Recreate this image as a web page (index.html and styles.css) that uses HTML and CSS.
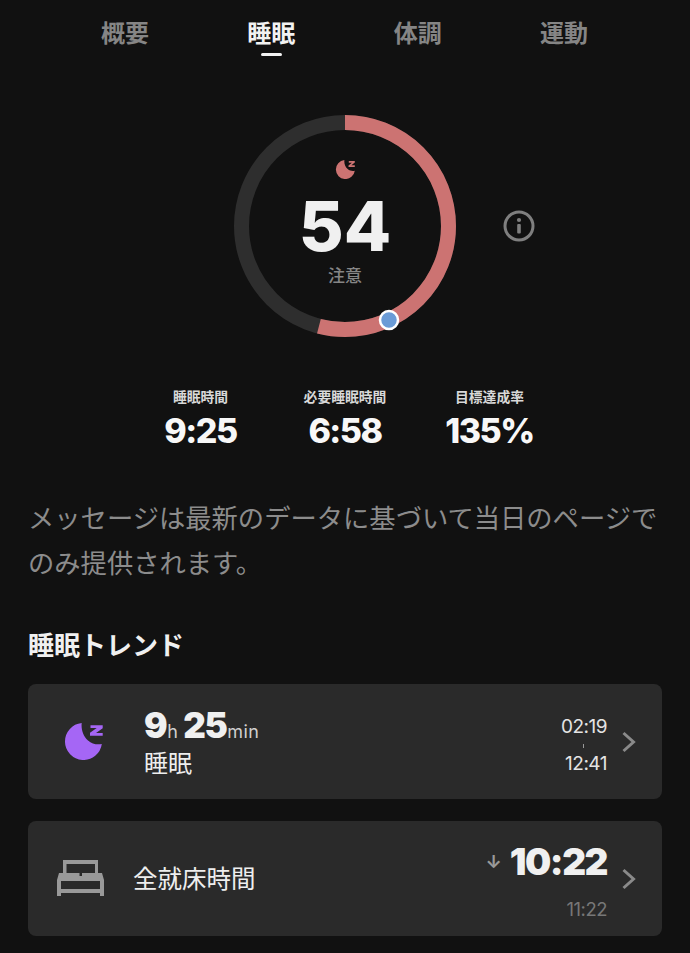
FILE: index.html
```html
<!DOCTYPE html>
<html lang="ja">

<head>
    <meta charset="UTF-8">
    <meta name="viewport" content="width=device-width, initial-scale=1.0">
    <title>睡眠</title>
    <link rel="stylesheet" href="styles.css">
</head>

<body>
    <nav class="tabs">
        <a class="tab">概要</a>
        <a class="tab active">睡眠</a>
        <a class="tab">体調</a>
        <a class="tab">運動</a>
    </nav>

    <section class="score">
        <div class="ring">
            <svg class="ring-svg" width="222" height="222" viewBox="0 0 222 222">
                <circle cx="111" cy="111" r="103.5" fill="none" stroke="#2e2e2e" stroke-width="15" />
                <circle cx="111" cy="111" r="103.5" fill="none" stroke="#cc7372" stroke-width="15"
                    stroke-dasharray="351.2 650.3" transform="rotate(-90 111 111)" />
                <circle cx="155" cy="205" r="9" fill="#6a9bd6" stroke="#fff" stroke-width="2.5" />
            </svg>
            <div class="ring-text">
                <svg class="moon-small" width="20" height="20" viewBox="0 0 20 20">
                    <path d="M9.4 1.1 A9.5 9.5 0 1 0 19.8 11.8 C17.3 12.3 14.8 11.8 12.7 10 C10 7.6 9 4.2 9.4 1.1 Z" fill="#cc7372" />
                    <path d="M13.8 2 H19.8 V3.5 L16.4 6.3 H19.8 V8 H13.5 V6.4 L16.9 3.7 H13.8 Z" fill="#cc7372" />
                </svg>
                <div class="score-num">54</div>
                <div class="score-label">注意</div>
            </div>
        </div>
        <svg class="info" width="32" height="32" viewBox="0 0 32 32">
            <circle cx="16" cy="16" r="14" fill="none" stroke="#7f7f7f" stroke-width="3" />
            <rect x="14.2" y="14" width="3.6" height="9.5" rx="1" fill="#7f7f7f" />
            <circle cx="16" cy="10" r="2.1" fill="#7f7f7f" />
        </svg>
    </section>

    <section class="stats">
        <div class="stat">
            <div class="stat-label">睡眠時間</div>
            <div class="stat-value">9:25</div>
        </div>
        <div class="stat">
            <div class="stat-label">必要睡眠時間</div>
            <div class="stat-value">6:58</div>
        </div>
        <div class="stat">
            <div class="stat-label">目標達成率</div>
            <div class="stat-value">135%</div>
        </div>
    </section>

    <p class="message">メッセージは最新のデータに基づいて当日のページでのみ提供されます。</p>

    <h2 class="trend-title">睡眠トレンド</h2>

    <div class="card">
        <svg class="moon" width="40" height="40" viewBox="0 0 40 40">
            <path d="M17.7 3.1 A18.5 18.5 0 1 0 37.8 24 C33 25 28 24 24 20.5 C19 16 17 9 17.7 3.1 Z" fill="#a566f5" />
            <path d="M26.5 5.2 H38.7 V8.2 L32 13 H38.7 V15.8 H26 V12.8 L32.7 8 H26.5 Z" fill="#a566f5" />
        </svg>
        <div class="sleep-main">
            <div class="duration"><b>9</b><span class="unit unit-h">h</span><b>25</b><span class="unit">min</span></div>
            <div class="sleep-label">睡眠</div>
        </div>
        <div class="times">
            <div>02:19</div>
            <div class="tick"></div>
            <div>12:41</div>
        </div>
        <svg class="chevron" width="16" height="22" viewBox="0 0 16 22">
            <path d="M2.5 2 L12.5 11 L2.5 20" fill="none" stroke="#8a8a8a" stroke-width="3" />
        </svg>
    </div>

    <div class="card">
        <svg class="bed" width="48" height="36" viewBox="0 0 48 36">
            <path fill="#999" fill-rule="evenodd" d="M6 0 H41 V13 H45 L47 20 V36 H43 V33 H4 V36 H0 V20 L2 13 H6 Z M9.5 4 H38 V13 H25 V16 H22.5 V13 H9.5 Z M4 21 V29 H43 V21 Z" />
        </svg>
        <div class="bed-label">全就床時間</div>
        <div class="bed-time">
            <div class="bed-top"><span class="arrow">↓</span><b>10:22</b></div>
            <div class="bed-sub">11:22</div>
        </div>
        <svg class="chevron" width="16" height="22" viewBox="0 0 16 22">
            <path d="M2.5 2 L12.5 11 L2.5 20" fill="none" stroke="#8a8a8a" stroke-width="3" />
        </svg>
    </div>
</body>

</html>
```

FILE: styles.css
```css
html,
body {
    height: 953px;
    overflow: hidden;
}

body {
    margin: 0;
    padding: 0;
    background-color: #111111;
    color: #f0f0f0;
    font-family: "Inter", "Noto Sans CJK JP", sans-serif;
}

.tabs {
    display: grid;
    grid-template-columns: repeat(4, 146.4px);
    justify-content: center;
    padding: 16px 1px 0 0;
    height: 99px;
    box-sizing: border-box;
}

.tab {
    justify-self: center;
    height: 40px;
    font-size: 24px;
    line-height: 35px;
    font-weight: 700;
    color: #858585;
    position: relative;
}

.tab.active {
    color: #f2f2f2;
}

.tab.active::after {
    content: "";
    position: absolute;
    left: 14px;
    right: 13px;
    bottom: 0;
    height: 3px;
    border-radius: 2px;
    background-color: #f2f2f2;
}

.score {
    display: flex;
    align-items: center;
    height: 254px;
    padding: 16px 0 16px 234px;
    box-sizing: border-box;
}

.ring {
    position: relative;
    width: 222px;
    height: 222px;
}

.ring-svg {
    display: block;
}

.ring-text {
    position: absolute;
    inset: 0;
    display: flex;
    flex-direction: column;
    align-items: center;
}

.moon-small {
    margin-top: 44px;
}

.score-num {
    font-size: 69px;
    line-height: 64px;
    font-weight: 800;
    margin-top: 15px;
    color: #f0f0f0;
}

.score-label {
    font-size: 17px;
    line-height: 24px;
    font-weight: 500;
    color: #858585;
    margin-top: 6px;
}

.info {
    margin-left: 47px;
}

.stats {
    display: grid;
    grid-template-columns: repeat(3, 144.5px);
    justify-content: center;
    margin-top: 33px;
    height: 74px;
}

.stat {
    text-align: center;
}

.stat-label {
    font-size: 13.8px;
    line-height: 22px;
    font-weight: 700;
    color: #d8d8d8;
}

.stat-value {
    font-size: 34px;
    line-height: 44px;
    font-weight: 800;
    letter-spacing: -1.5px;
    margin-top: 1px;
    color: #f8f8f8;
}

.message {
    margin: 36px 28px 0;
    font-size: 26.3px;
    line-height: 45px;
    font-weight: 400;
    color: #8c8c8c;
}

.trend-title {
    margin: 43px 28px 0;
    font-size: 26px;
    line-height: 34px;
    font-weight: 700;
    color: #f0f0f0;
}

.card {
    display: flex;
    align-items: center;
    margin: 21px 28px 0;
    height: 115px;
    background-color: #2a2a2a;
    border-radius: 8px;
    box-sizing: border-box;
    padding: 0 25px 0 28px;
}

.card + .card {
    margin-top: 22px;
}

.moon {
    flex: none;
    margin-left: 8px;
    margin-top: -4px;
}

.sleep-main {
    margin-left: 40px;
    flex: 1;
}

.duration {
    font-size: 35px;
    line-height: 40px;
    font-weight: 800;
    color: #f0f0f0;
    margin-top: -2px;
}

.duration b {
    letter-spacing: -1.5px;
}

.unit {
    font-size: 18px;
    font-weight: 400;
    color: #d0d0d0;
    letter-spacing: 0.5px;
    margin-left: 1px;
}

.unit-h {
    margin-right: 5px;
}

.sleep-label {
    font-size: 24px;
    line-height: 24px;
    color: #eeeeee;
}

.times {
    margin-top: 8px;
    text-align: right;
    font-size: 19px;
    line-height: 22px;
    color: #e4e4e4;
    letter-spacing: -0.5px;
}

.tick {
    width: 1px;
    height: 4px;
    margin: 6px 23px 5px auto;
    background-color: #999;
}

.chevron {
    flex: none;
    margin-left: 14px;
}

.bed {
    flex: none;
    margin-top: -2px;
    margin-left: 1px;
}

.bed-label {
    margin-left: 28px;
    flex: 1;
    font-size: 24.5px;
    line-height: 34px;
    color: #eeeeee;
}

.bed-time {
    margin-top: 3px;
    text-align: right;
}

.bed-top {
    font-size: 37px;
    line-height: 42px;
    font-weight: 800;
    letter-spacing: -1.5px;
    color: #f0f0f0;
}

.arrow {
    font-size: 18px;
    font-weight: 700;
    letter-spacing: 0;
    color: #999;
    vertical-align: 7px;
    margin-right: 8px;
}

.bed-sub {
    margin-top: 15px;
    font-size: 18.5px;
    line-height: 22px;
    color: #777;
    letter-spacing: -0.5px;
}
```
